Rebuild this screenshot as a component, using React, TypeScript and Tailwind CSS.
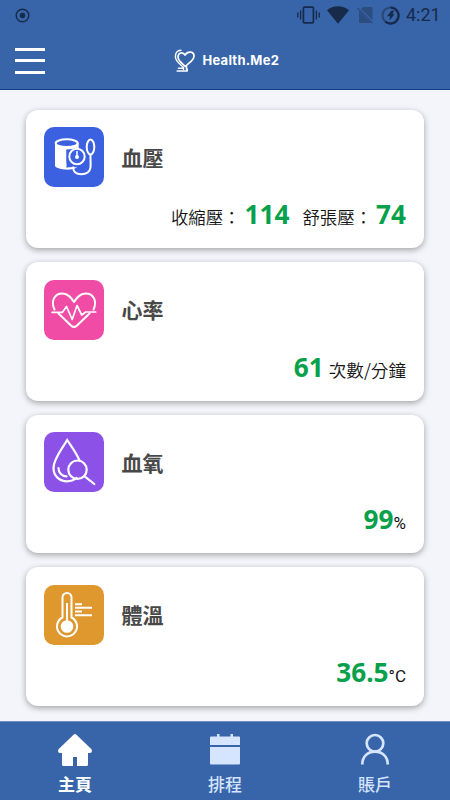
import React from "react";

const CJK = "font-['Noto_Sans','Noto_Sans_CJK_TC',sans-serif]";

function StatusBar() {
  return (
    <div className="flex h-[30px] items-center justify-between pr-[10px] pl-[15px] text-[#172a49]">
      <svg width="15" height="15" viewBox="0 0 15 15" fill="none">
        <circle cx="7.5" cy="7.5" r="6.3" stroke="currentColor" strokeWidth="1.4" />
        <circle cx="7.5" cy="7.5" r="2.7" fill="currentColor" />
      </svg>
      <div className="flex items-center">
        <svg width="23" height="18" viewBox="0 0 23 18" fill="none" stroke="currentColor">
          <rect x="6.4" y="1.2" width="10" height="15.6" rx="1" strokeWidth="1.7" />
          <path d="M3.6 4.5v9M19.4 4.5v9M.8 6.5v5M22.2 6.5v5" strokeWidth="1.3" />
        </svg>
        <svg className="ml-[7px]" width="22" height="18" viewBox="0 0 22 18">
          <path d="M0 4.2C6-1 16-1 22 4.2L11 17.8Z" fill="currentColor" />
        </svg>
        <svg className="ml-[8px]" width="17" height="18" viewBox="0 0 17 18" fill="#2b4d80">
          <path d="M6 1h8.5q1 0 1 1v12L4 3ZM2 4.8 14.2 17H3q-1 0-1-1Z" />
          <path d="M.5 2 15.5 17" stroke="#2b4d80" strokeWidth="1.3" />
        </svg>
        <svg className="ml-[7px]" width="19" height="19" viewBox="0 0 19 19" fill="none">
          <circle cx="9.5" cy="9.5" r="8" stroke="#284976" strokeWidth="2.2" />
          <path d="M9.5 1.5a8 8 0 1 1-5 14.2" stroke="currentColor" strokeWidth="2.2" />
          <path d="M10.5 4.5H13l-1.500 3.700h2L8.500 14.500l.5-4.300H6Z" fill="currentColor" />
        </svg>
        <span className="ml-[6px] w-[34px] text-[18px] leading-[20px] whitespace-nowrap font-['Roboto',sans-serif]">4:21</span>
      </div>
    </div>
  );
}

function Header() {
  return (
    <header className="h-[90px] shrink-0 border-b border-[#123f87] bg-[#3865a9]">
      <StatusBar />
      <div className="flex h-[59px] items-center pt-[2px] pl-[15px]">
        <div className="flex w-[30px] flex-col gap-[8.5px]">
          <span className="h-[3px] bg-white" />
          <span className="h-[3px] bg-white" />
          <span className="h-[3px] bg-white" />
        </div>
        <svg className="ml-[129px]" width="22" height="24" viewBox="0 0 22 24" fill="none" stroke="#fff" strokeLinecap="round" strokeLinejoin="round">
          <path d="M11 6C9 2.5 4 3.5 4 8c0 4 4.5 6.5 7.3 9.5C15 13.5 20 11.5 20 7c0-4.5-6-5.5-9-1Z" strokeWidth="1.7" />
          <path d="M7 1.3C3 1.3 1.3 4 1.4 8c.2 4.5 4.6 7 8 10.2v2.3" strokeWidth="1.4" />
          <path d="M12.5 17v3.3M4.5 19.3h5M3.2 22h10v-2" strokeWidth="1.6" />
        </svg>
        <span className="ml-[6.5px] text-[13px] font-bold tracking-[0.25px] text-white font-['Inter',sans-serif]">Health.Me2</span>
      </div>
    </header>
  );
}

function PressureIcon() {
  return (
    <svg width="60" height="60" viewBox="0 0 60 60" fill="none" stroke="#fff" strokeWidth="2">
      <path d="M11 16v23c1 2 7 3.6 11 3.6 5 0 9-1 11-2.3L22.5 36V22Z" fill="#fff" stroke="none" />
      <path d="M22.5 22H33v18q-5 1-10.5 1Z" fill="#3c61e0" stroke="none" />
      <ellipse cx="22.7" cy="16.2" rx="11" ry="3.9" fill="#3c61e0" />
      <path d="M12 19.5c6 2.6 15 2.6 21 0" />
      <path d="M33.7 16v8M22.5 41.6c3 0 6-.3 8-1.2" />
      <circle cx="33" cy="29.5" r="7.7" fill="#3c61e0" />
      <circle cx="33" cy="30" r="2" fill="#fff" stroke="none" />
      <path d="M33 24v6" strokeWidth="1.5" />
      <ellipse cx="46.5" cy="20" rx="3.8" ry="7.5" />
      <path d="M46.5 27.5c-.2 4 .4 8 0 13-.6 4-4 6.8-9 6.8-5.5 0-8.5-3-8.5-7.5" />
    </svg>
  );
}

function HeartIcon() {
  return (
    <svg width="60" height="60" viewBox="0 0 60 60" fill="none" stroke="#fff" strokeWidth="2" strokeLinecap="round" strokeLinejoin="round">
      <path d="M10.5 29.5C6.5 21 10.5 13.5 18.5 13.5c5.5 0 8.5 4 11.5 8.5 3-4.5 6-8.5 11.5-8.5 8 0 12 7.5 8 16" />
      <path d="M14.5 33.5 27 45.5q3 3 6 0L45.5 33.5" />
      <path d="M8 32.3h10.5l4-5.8 5.7 13L33 25.5l4.7 9.5 4-3h10" strokeWidth="1.7" />
    </svg>
  );
}

function DropIcon() {
  return (
    <svg width="60" height="60" viewBox="0 0 60 60" fill="none" stroke="#fff" strokeWidth="2.2" strokeLinecap="round">
      <path d="M35.5 28.5C32.5 21 28 15 23.2 8 18 17 9.5 27 9.5 36c0 8 6 13.3 13.5 13.3 3.8 0 7-1.2 9.5-3.3" />
      <path d="M14.5 36c0 4.5 3.5 8.4 8 8.4" />
      <circle cx="33.5" cy="37.7" r="9.2" />
      <path d="m40.3 44.2 10 7.8" />
    </svg>
  );
}

function ThermometerIcon() {
  return (
    <svg width="60" height="60" viewBox="0 0 60 60" fill="none" stroke="#fff" strokeWidth="2">
      <path d="M18.5 32.5V12.5a4.5 4.5 0 0 1 9 0v20a10 10 0 1 1-9 0Z" />
      <circle cx="23" cy="41.5" r="6.3" fill="#fff" stroke="none" />
      <path d="M23 18v20" />
      <path d="M31 19.2h7M31 22.8h17M31 26.5h7M31 30.2h17" strokeWidth="1.9" />
    </svg>
  );
}

interface CardProps {
  title: string;
  tile: string;
  icon: React.ReactNode;
  children: React.ReactNode;
}

function Card({ title, tile, icon, children }: CardProps) {
  return (
    <section className="h-[138.5px] shrink-0 rounded-[12px] bg-white px-[18px] pt-[17.5px] shadow-[0_2px_6px_rgba(0,0,0,0.34)]">
      <div className="flex items-center">
        <div className={`h-[60px] w-[60px] rounded-[10px] ${tile}`}>{icon}</div>
        <h2 className="ml-[17.5px] pt-px text-[21px] leading-[30px] font-bold text-[#484848]">{title}</h2>
      </div>
      <div className="mt-[9px] flex h-[36px] items-baseline justify-end text-[17.4px] leading-[36px] font-[350] whitespace-nowrap text-[#151515]">
        {children}
      </div>
    </section>
  );
}

function Value({ children }: { children: React.ReactNode }) {
  return <span className="text-[26.2px] leading-[36px] font-bold text-[#06a14a]">{children}</span>;
}

function BottomNav() {
  return (
    <nav className="flex h-[79px] shrink-0 border-t border-[#7190c2] bg-[#3865a9] text-[17px] leading-[24px] text-[#d5e4ff]">
      <div className="flex flex-1 flex-col items-center pt-[10px] font-bold text-white">
        <svg width="36" height="36" viewBox="0 0 36 36" fill="currentColor">
          <path d="M16.8 2.5q1.2-1 2.4 0L34.5 17.3q1.3 3.7-1.5 3.7h-2v11.5q0 1.5-1.5 1.5H20v-9h-4v9H6.5Q5 34 5 32.5V21H3Q.2 21 1.5 17.3Z" />
        </svg>
        <span className="mt-[5px]">主頁</span>
      </div>
      <div className="flex flex-1 flex-col items-center pt-[10px] font-medium">
        <svg width="36" height="36" viewBox="0 0 36 36" fill="currentColor">
          <path d="M3 5.5Q3 4.5 4 4.5h6V2h2.5v2.5h11V2H26v2.5h6q1 0 1 1V13H3ZM3 15h30v16.5q0 1-1 1H4q-1 0-1-1Z" />
        </svg>
        <span className="mt-[5px]">排程</span>
      </div>
      <div className="flex flex-1 flex-col items-center pt-[10px] font-medium">
        <svg width="36" height="36" viewBox="0 0 36 36" fill="none" stroke="currentColor" strokeWidth="2.7">
          <circle cx="18" cy="11.3" r="8.3" />
          <path d="M5.3 32.5C5.3 24.5 10.5 19.7 18 19.7s12.7 4.8 12.7 12.8" />
        </svg>
        <span className="mt-[5px]">賬戶</span>
      </div>
    </nav>
  );
}

export default function App() {
  return (
    <div lang="zh-Hant" className={`flex h-[800px] w-[450px] flex-col overflow-hidden bg-[#f4f5fa] ${CJK}`}>
      <Header />
      <main className="flex min-h-0 flex-1 flex-col gap-[14px] overflow-hidden px-[26px] pt-[19.5px]">
        <Card title="血壓" tile="bg-[#3c61e0]" icon={<PressureIcon />}>
          <span>收縮壓：</span>
          <span className="ml-[4px]"><Value>114</Value></span>
          <span className="ml-[13px]">舒張壓：</span>
          <span className="ml-[4px]"><Value>74</Value></span>
        </Card>
        <Card title="心率" tile="bg-[#f04ba5]" icon={<HeartIcon />}>
          <Value>61</Value>
          <span className="ml-[5px] font-['Noto_Sans_CJK_TC',sans-serif] text-[17.6px]">次數/分鐘</span>
        </Card>
        <Card title="血氧" tile="bg-[#8c52e8]" icon={<DropIcon />}>
          <Value>99</Value>
          <span className="font-['Roboto',sans-serif] text-[17px] font-normal">%</span>
        </Card>
        <Card title="體溫" tile="bg-[#df982e]" icon={<ThermometerIcon />}>
          <Value>36.5</Value>
          <span className="font-['Roboto',sans-serif] text-[17px] font-normal">°C</span>
        </Card>
      </main>
      <BottomNav />
    </div>
  );
}
